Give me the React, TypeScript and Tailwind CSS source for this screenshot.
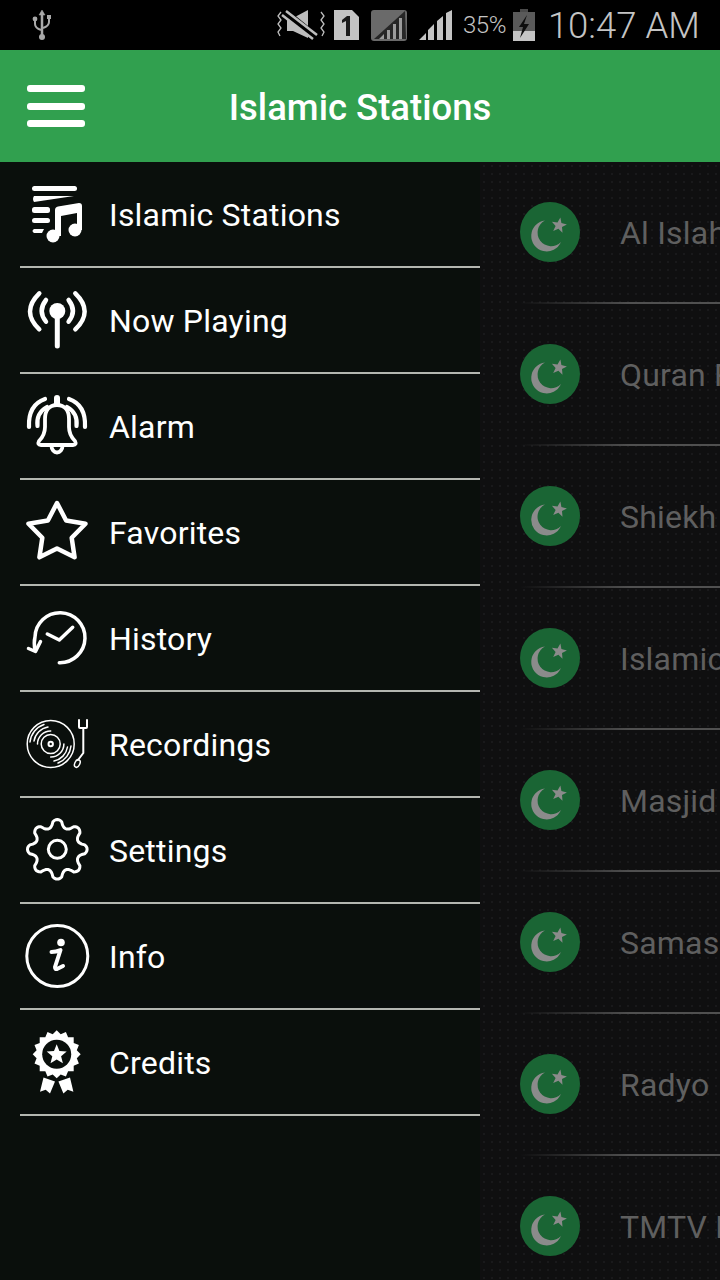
// Islamic Stations: drawer open over the station list
const star = (cx: number, cy: number, R: number, r: number, rot = -90) =>
  Array.from({ length: 10 }, (_, i) => {
    const a = ((rot + i * 36) * Math.PI) / 180;
    const d = i % 2 ? r : R;
    return `${(cx + d * Math.cos(a)).toFixed(1)},${(cy + d * Math.sin(a)).toFixed(1)}`;
  }).join(" ");

const gear = () => {
  const pts: string[] = [];
  for (let deg = 0; deg < 360; deg += 3) {
    const a = ((deg - 90) * Math.PI) / 180;
    const c = Math.cos((8 * deg * Math.PI) / 180);
    const d = 26 + 3.8 * Math.sign(c) * Math.pow(Math.abs(c), 0.6);
    pts.push(`${(37.3 + d * Math.cos(a)).toFixed(1)},${(34.3 + d * Math.sin(a)).toFixed(1)}`);
  }
  return pts.join(" ");
};

const scallop = () => {
  const pts: string[] = [];
  for (let i = 0; i < 32; i++) {
    const a = ((i * 360) / 32 * Math.PI) / 180;
    const d = i % 2 ? 20.5 : 24;
    pts.push(`${(36.7 + d * Math.cos(a)).toFixed(1)},${(27.3 + d * Math.sin(a)).toFixed(1)}`);
  }
  return pts.join(" ");
};

const icons: Record<string, React.ReactNode> = {
  music: (
    <g fill="white">
      <rect x="12" y="7" width="45" height="5" rx="2.5" />
      <path d="M14 17 H54 L14 23 Q12 20 14 17Z" />
      <rect x="12" y="28" width="18" height="6" rx="2.5" />
      <rect x="12" y="39" width="18" height="5" rx="2.5" />
      <path d="M14 50 H24 L22 54 H14 Q11 52 14 50Z" />
      <circle cx="33" cy="57" r="6.5" />
      <circle cx="55" cy="51" r="6.5" />
      <path d="M35 31 Q35 28 38 27.5 L59 24 Q62 24 62 27 V51 H57 V34 L41 37 V57 H35Z" />
    </g>
  ),
  antenna: (
    <g fill="none" stroke="white" strokeWidth="4.5" strokeLinecap="round">
      <circle cx="37.3" cy="26" r="8" fill="white" stroke="none" />
      <path d="M37.3 28 V61" strokeWidth="5" />
      <path d="M19.3 8.3 Q0.7 26.5 19.3 44.3" />
      <path d="M26 15 Q17.4 26 26 36.7" />
      <path d="M55.3 8.3 Q74 26.5 55.3 44.3" />
      <path d="M48.6 15 Q57.2 26 48.6 36.7" />
    </g>
  ),
  bell: (
    <g fill="none" stroke="white" strokeWidth="3.8" strokeLinecap="round" strokeLinejoin="round">
      <path d="M37 14 C29 14 25 20 25 28 V36 C25 43 22 47 19 50 Q17 54 21 54 H53 Q57 54 55 50 C52 47 49 43 49 36 V28 C49 20 45 14 37 14Z" />
      <path d="M37 7 V13" strokeWidth="6" />
      <path d="M31.5 55 A5.5 6.5 0 0 0 42.5 55" />
      <path d="M25 8 Q8 14 9 36" strokeWidth="4.2" />
      <path d="M27 16 Q16 22 17.5 35" strokeWidth="4.2" />
      <path d="M49 8 Q66 14 65 36" strokeWidth="4.2" />
      <path d="M47 16 Q58 22 56.5 35" strokeWidth="4.2" />
    </g>
  ),
  star: (
    <polygon points={star(37, 36, 30, 15.5)} fill="none" stroke="white" strokeWidth="4.5" strokeLinejoin="round" />
  ),
  history: (
    <g fill="none" stroke="white" strokeWidth="3.5" strokeLinecap="round" strokeLinejoin="round">
      <path d="M15 47 C14 42 14 38 15 34 A25 25 0 1 1 39.3 59.7" />
      <path d="M8.5 45.5 L15.5 48.5 L20.5 38.5" />
      <path d="M27.3 31 L39.3 37 L52.7 24.3" />
    </g>
  ),
  vinyl: (
    <g fill="none" stroke="white" strokeWidth="1.5" strokeLinecap="round">
      <circle cx="30.7" cy="35" r="23.5" />
      <circle cx="30.7" cy="35" r="2.2" strokeWidth="2" />
      <circle cx="30.7" cy="35" r="9.5" />
      <path d="M17.5 35 A13 13 0 0 1 30.7 22" />
      <path d="M43.9 35 A13 13 0 0 1 30.7 48" />
      <path d="M14 32 A17 17 0 0 1 28 18" />
      <path d="M47.5 38 A17 17 0 0 1 34 52" />
      <path d="M10 33 A20.5 20.5 0 0 1 24 15.5" />
      <path d="M51 37 A20.5 20.5 0 0 1 38 54" />
      <path d="M59 11 V18 Q59 19 60 19 H66 Q67 19 67 18 V11" strokeWidth="2" />
      <path d="M63.3 19 V44 L58 51" strokeWidth="2" />
      <ellipse cx="57.3" cy="54.5" rx="2.5" ry="4" transform="rotate(25 57.3 54.5)" />
    </g>
  ),
  gear: (
    <g fill="none" stroke="white" strokeWidth="3" strokeLinejoin="round">
      <polygon points={gear()} />
      <circle cx="37.3" cy="34.3" r="9" />
    </g>
  ),
  info: (
    <g fill="none" stroke="white" strokeLinecap="round">
      <circle cx="37.3" cy="35" r="30.5" strokeWidth="3" />
      <circle cx="41" cy="21.5" r="3.8" fill="white" stroke="none" />
      <path d="M31.5 31 Q36 31 40.5 29 L35 46 Q35 48.5 37 48 L43 45" strokeWidth="4" strokeLinejoin="round" />
    </g>
  ),
  credits: (
    <g fill="white">
      <polygon points={scallop()} />
      <circle cx="36.7" cy="27.3" r="14.5" fill="#0a0f0c" />
      <polygon points={star(36.7, 27.8, 10.5, 4.6)} />
      <polygon points="23.5,50.5 35,54.5 30,66.5 25.7,62.7 20,64.7" />
      <polygon points="50,50.5 38.4,54.5 43.4,66.5 47.7,62.7 53.4,64.7" />
    </g>
  ),
};

const menu = [
  ["Islamic Stations", "music"],
  ["Now Playing", "antenna"],
  ["Alarm", "bell"],
  ["Favorites", "star"],
  ["History", "history"],
  ["Recordings", "vinyl"],
  ["Settings", "gear"],
  ["Info", "info"],
  ["Credits", "credits"],
];

const stations = [
  "Al Islah Radio",
  "Quran Radio",
  "Shiekh Radio",
  "Islamic Radio",
  "Masjid Radio",
  "Samas Radio",
  "Radyo",
  "TMTV Radio",
];

function StatusBar() {
  return (
    <div className="h-[50px] bg-black flex items-center text-[#c4c4c4] shrink-0">
      <svg width="20" height="32" viewBox="0 0 20 32" className="ml-[32px]">
        <g fill="#a9a9a9" stroke="#a9a9a9">
          <path d="M10 1 L13 6 H7Z" strokeWidth="0.5" />
          <path d="M10 5 V28" strokeWidth="2.5" fill="none" />
          <circle cx="10" cy="28" r="3" stroke="none" />
          <path d="M3 11 V15 Q3 19 9 21" strokeWidth="2" fill="none" />
          <path d="M17 9 V13 Q17 17 11 19" strokeWidth="2" fill="none" />
          <circle cx="3" cy="10" r="2.4" stroke="none" />
          <rect x="15" y="6" width="4" height="4" stroke="none" />
        </g>
      </svg>
      <svg width="48" height="34" viewBox="0 0 48 34" className="ml-[225px]">
        <g fill="none" stroke="#bdbdbd">
          <path d="M4 4 L1 8 L4 12 L1 16 L4 20 L1 24 L3 28" strokeWidth="1.3" />
          <path d="M44 4 L47 8 L44 12 L47 16 L44 20 L47 24 L45 28" strokeWidth="1.3" />
          <path d="M10 10 H16 L31 2 V30 L16 23 H10Z" fill="#bdbdbd" stroke="none" />
          <path d="M7 3 L39 29" stroke="#000" strokeWidth="7" />
          <path d="M9 3 L40 27" strokeWidth="2.5" />
          <path d="M5 7 L36 31" strokeWidth="2.5" />
        </g>
      </svg>
      <svg width="25" height="30" viewBox="0 0 25 30" className="ml-[9px]">
        <path d="M0 0 H18 L25 7 V30 H0Z" fill="#c4c4c4" />
        <path d="M8 10 L13 6 H16 V26 H12 V11 L8 13Z" fill="#1a1a1a" />
      </svg>
      <svg width="36" height="32" viewBox="0 0 36 32" className="ml-[12px]">
        <rect x="0" y="1" width="36" height="31" rx="3" fill="#6a6a6a" />
        <path d="M34 2 L35 30 H3Z" fill="#262626" />
        <path d="M8 30 L13 25 V30Z M16 30 V21 H19 V30Z M22 30 V15 H25 V30Z M28 30 V9 H31 V30Z" fill="#9b9b9b" />
      </svg>
      <svg width="33" height="31" viewBox="0 0 33 31" className="ml-[12px]">
        <path d="M0 30 L7 23 V30Z M9 30 V20 L15 14 V30Z M18 30 V11 L24 6 V30Z M27 30 V3 L33 0 V30Z" fill="#c4c4c4" />
      </svg>
      <span className="ml-[11px] text-[24px] font-light tracking-[-0.5px]">35%</span>
      <svg width="22" height="32" viewBox="0 0 22 32" className="ml-[7px]">
        <rect x="7" y="0" width="8" height="3" fill="#4a4a4a" />
        <rect x="0" y="3" width="22" height="29" fill="#5a5a5a" />
        <rect x="0" y="22" width="22" height="10" fill="#c4c4c4" />
        <path d="M14 6 L6 18 H10 L7 29 L16 15 H11Z" fill="#0d0d0d" />
      </svg>
      <span className="ml-[13px] pt-[2px] text-[36.5px] font-light whitespace-nowrap">10:47 AM</span>
    </div>
  );
}

function Header() {
  return (
    <div className="h-[112px] bg-[#31a04f] relative flex items-center justify-center shrink-0">
      <div className="absolute left-[27px] top-[35px] w-[58px] flex flex-col gap-[10.5px]">
        <div className="h-[7px] rounded-[3px] bg-white" />
        <div className="h-[7px] rounded-[3px] bg-white" />
        <div className="h-[7px] rounded-[3px] bg-white" />
      </div>
      <h1 className="text-white text-[36.5px] font-medium pt-[5px]">Islamic Stations</h1>
    </div>
  );
}

function Drawer() {
  return (
    <div className="w-[480px] shrink-0 bg-[#0a0f0c] pl-5">
      {menu.map(([label, icon]) => (
        <div key={label} className="h-[106px] flex items-center border-b-2 border-[#b3b7b0]">
          <svg width="89" height="70" viewBox="0 0 89 70" className="shrink-0">
            {icons[icon]}
          </svg>
          <span className="text-white text-[32px] tracking-[0.2px] pt-[2px]">{label}</span>
        </div>
      ))}
    </div>
  );
}

function StationList() {
  return (
    <div className="flex-1 overflow-hidden bg-[#0f0f10] bg-[radial-gradient(#19191b_1.5px,transparent_1.5px)] bg-[size:8px_8px]">
      {stations.map((name) => (
        <div key={name}>
          <div className="h-[140px] pl-10 flex items-center gap-10">
            <svg width="60" height="60" viewBox="0 0 60 60" className="shrink-0">
              <circle cx="30" cy="30" r="30" fill="#1a6534" />
              <path d="M25 18.5 A15.5 15.5 0 1 0 41 40 A13.6 13.6 0 1 1 25 18.5Z" fill="#8b8b8b" />
              <polygon points={star(39, 23.5, 8, 3.4, -80)} fill="#8b8b8b" />
            </svg>
            <span className="text-[#5f5f5f] text-[32px] tracking-[0.2px] pt-[2px] whitespace-nowrap">{name}</span>
          </div>
          <div className="h-[2px] ml-10 bg-[linear-gradient(to_right,transparent,#505050_55%)]" />
        </div>
      ))}
    </div>
  );
}

export default function App() {
  return (
    <div className="w-[720px] h-[1280px] overflow-hidden flex flex-col bg-black [font-family:Roboto,sans-serif]">
      <StatusBar />
      <Header />
      <div className="flex flex-1 min-h-0">
        <Drawer />
        <StationList />
      </div>
    </div>
  );
}
